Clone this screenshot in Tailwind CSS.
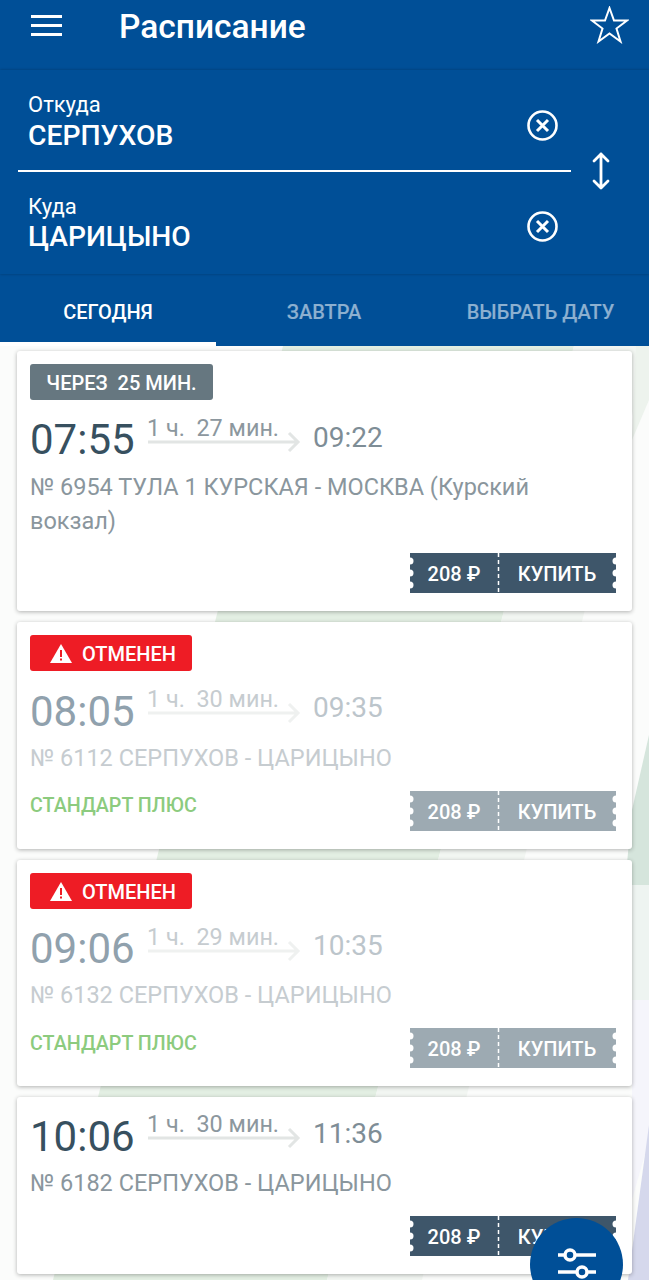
<!DOCTYPE html>
<html lang="ru">
<head>
<meta charset="utf-8">
<script src="https://cdn.jsdelivr.net/npm/@tailwindcss/browser@4"></script>
</head>
<body class="m-0">
<div class="relative w-[649px] h-[1280px] overflow-hidden bg-[#fbfcfb] font-['Roboto',sans-serif]">
  <svg class="absolute left-0 top-0" width="649" height="1280" viewBox="0 0 649 1280" fill="none">
    <polygon points="283,346 574,346 327,1280 53,1280" fill="#e3efe3"/>
    <polygon points="574,346 649,346 422,1280 327,1280" fill="#f2f6f2"/>
    <polygon points="636,346 649,346 649,400 632,440" fill="#edf3ed"/>
    <polygon points="649,735 649,885 625,885 632,810" fill="#d5e5dc"/>
    <polygon points="649,885 649,1060 632,1060 632,885" fill="#eef4f1"/>
    <polygon points="649,1000 649,1140 632,1200 632,1000" fill="#f5f5fb"/>
    <polygon points="649,1125 649,1280 628,1280" fill="#d5d8ec"/>
  </svg>

  <div class="relative flex flex-col bg-[#004f97] text-white">
    <div class="flex items-center h-[70px] relative">
      <svg class="absolute left-[31px] top-[15px]" width="31" height="21" viewBox="0 0 31 21" fill="#fff"><rect width="31" height="3"/><rect y="9" width="31" height="3"/><rect y="18" width="31" height="3"/></svg>
      <div class="absolute left-[119px] top-[7px] text-[33.500px] leading-[40px] font-medium">Расписание</div>
      <svg class="absolute left-[590px] top-[6px]" width="39" height="38" viewBox="0 0 39 38" fill="none" stroke="#fff" stroke-width="2"><polygon points="19.500,2 24,14.500 37,14.500 26.500,22.500 30.500,35.500 19.500,27.500 8.500,35.500 12.500,22.500 2,14.500 15,14.500"/></svg>
    </div>
    <div class="relative h-[204px] shadow-[0_-1px_2px_rgba(0,0,0,0.12),0_1px_2px_rgba(0,0,0,0.12)]">
      <div class="absolute left-[28px] top-[21px] text-[22px] leading-[28px]">Откуда</div>
      <div class="absolute left-[28px] top-[49px] text-[28.300px] leading-[34px] font-medium">СЕРПУХОВ</div>
      <svg class="absolute left-[527px] top-[40px]" width="31" height="31" viewBox="0 0 31 31" fill="none" stroke="#fff" stroke-width="2.600"><circle cx="15.500" cy="15.500" r="14"/><path d="M10 10l11 11M21 10l-11 11" stroke-width="3"/></svg>
      <div class="absolute left-[18px] top-[100px] w-[553px] h-[2px] bg-white"></div>
      <svg class="absolute left-[590px] top-[82px]" width="22" height="38" viewBox="0 0 22 38" fill="none" stroke="#fff" stroke-width="2.800" stroke-linecap="round" stroke-linejoin="round"><path d="M11 2v34M4 9l7-7 7 7M4 29l7 7 7-7"/></svg>
      <div class="absolute left-[28px] top-[123px] text-[22px] leading-[28px]">Куда</div>
      <div class="absolute left-[28px] top-[150px] text-[28.200px] leading-[34px] font-medium">ЦАРИЦЫНО</div>
      <svg class="absolute left-[527px] top-[141px]" width="31" height="31" viewBox="0 0 31 31" fill="none" stroke="#fff" stroke-width="2.600"><circle cx="15.500" cy="15.500" r="14"/><path d="M10 10l11 11M21 10l-11 11" stroke-width="3"/></svg>
    </div>
    <div class="flex h-[72px] text-[20px] font-medium">
      <div class="relative w-[216px] flex items-center justify-center pt-[4px]">СЕГОДНЯ<div class="absolute left-0 right-0 bottom-0 h-[4px] bg-white"></div></div>
      <div class="w-[216px] flex items-center justify-center pt-[4px] text-white/55">ЗАВТРА</div>
      <div class="w-[217px] flex items-center justify-center pt-[4px] text-white/55">ВЫБРАТЬ ДАТУ</div>
    </div>
  </div>

  <div class="relative flex flex-col gap-[11px] mx-[17px] mt-[5px]">
    <!-- card 1 -->
    <div class="relative h-[260px] bg-white rounded-[3px] shadow-[0_1px_4px_rgba(0,0,0,0.3)]">
      <div class="absolute left-[13px] top-[13px] h-[36px] w-[183px] pt-[2px] flex items-center justify-center rounded-[3px] bg-[#667780] text-white text-[20px] font-medium">ЧЕРЕЗ&nbsp; 25 МИН.</div>
      <div class="absolute left-[13px] top-[64px] text-[42px] leading-[50px] text-[#37505f]">07:55</div>
      <div class="absolute left-[130px] top-[62px] text-[23.400px] leading-[30px] text-[#8c979e]">1 ч.&nbsp; 27 мин.</div>
      <svg class="absolute left-[131px] top-[80px]" width="153" height="22" viewBox="0 0 153 22" fill="none" stroke="#e2e5e4" stroke-width="3"><path d="M0 11h150M141 2l9 9-9 9"/></svg>
      <div class="absolute left-[296px] top-[69px] text-[28px] leading-[36px] text-[#7e8d96]">09:22</div>
      <div class="absolute left-[13px] top-[119px] w-[560px] text-[23.500px] leading-[34px] text-[#8a969d]">№ 6954 ТУЛА 1 КУРСКАЯ - МОСКВА (Курский вокзал)</div>
      <div class="absolute left-[393px] top-[202px] flex h-[40px] w-[206px] pt-[2px] items-center bg-[#3e566a] text-white text-[20px] font-medium">
        <svg class="absolute left-0 top-0" width="206" height="40" viewBox="0 0 206 40" fill="#fff"><circle cx="0" cy="8" r="3.500"/><circle cx="0" cy="20" r="3.500"/><circle cx="0" cy="32" r="3.500"/><circle cx="206" cy="8" r="3.500"/><circle cx="206" cy="20" r="3.500"/><circle cx="206" cy="32" r="3.500"/><path d="M88.500 0v40" stroke="#fff" stroke-width="1.500" stroke-dasharray="4 3"/></svg>
        <span class="relative w-[88px] text-center">208 ₽</span><span class="relative w-[118px] text-center">КУПИТЬ</span>
      </div>
    </div>
    <!-- card 2 -->
    <div class="relative h-[227px] bg-white rounded-[3px] shadow-[0_1px_4px_rgba(0,0,0,0.3)]">
      <div class="absolute left-[13px] top-[13px] h-[36px] w-[162px] flex items-center rounded-[3px] bg-[#ee1c25] text-white text-[20px] font-medium">
        <svg class="ml-[20px]" width="22" height="19" viewBox="0 0 22 19"><path d="M11 0l11 19H0z" fill="#fff"/><path d="M10 6h2v7h-2zM10 14.500h2v2h-2z" fill="#ee1c25"/></svg>
        <span class="ml-[10px] pt-[2px]">ОТМЕНЕН</span>
      </div>
      <div class="absolute left-[13px] top-[65px] text-[42px] leading-[50px] text-[#90a1ad]">08:05</div>
      <div class="absolute left-[130px] top-[62px] text-[23.400px] leading-[30px] text-[#c6ccd0]">1 ч.&nbsp; 30 мин.</div>
      <svg class="absolute left-[131px] top-[80px]" width="153" height="22" viewBox="0 0 153 22" fill="none" stroke="#eff1f0" stroke-width="3"><path d="M0 11h150M141 2l9 9-9 9"/></svg>
      <div class="absolute left-[296px] top-[68px] text-[28px] leading-[36px] text-[#bcc5cb]">09:35</div>
      <div class="absolute left-[13px] top-[119px] text-[23.500px] leading-[34px] text-[#c6ccd0]">№ 6112 СЕРПУХОВ - ЦАРИЦЫНО</div>
      <div class="absolute left-[13px] top-[169px] text-[19.700px] leading-[30px] font-medium text-[#8ccb7e]">СТАНДАРТ ПЛЮС</div>
      <div class="absolute left-[393px] top-[169px] flex h-[40px] w-[206px] pt-[2px] items-center bg-[#9daab2] text-white text-[20px] font-medium">
        <svg class="absolute left-0 top-0" width="206" height="40" viewBox="0 0 206 40" fill="#fff"><circle cx="0" cy="8" r="3.500"/><circle cx="0" cy="20" r="3.500"/><circle cx="0" cy="32" r="3.500"/><circle cx="206" cy="8" r="3.500"/><circle cx="206" cy="20" r="3.500"/><circle cx="206" cy="32" r="3.500"/><path d="M88.500 0v40" stroke="#fff" stroke-width="1.500" stroke-dasharray="4 3"/></svg>
        <span class="relative w-[88px] text-center">208 ₽</span><span class="relative w-[118px] text-center">КУПИТЬ</span>
      </div>
    </div>
    <!-- card 3 -->
    <div class="relative h-[226px] bg-white rounded-[3px] shadow-[0_1px_4px_rgba(0,0,0,0.3)]">
      <div class="absolute left-[13px] top-[13px] h-[36px] w-[162px] flex items-center rounded-[3px] bg-[#ee1c25] text-white text-[20px] font-medium">
        <svg class="ml-[20px]" width="22" height="19" viewBox="0 0 22 19"><path d="M11 0l11 19H0z" fill="#fff"/><path d="M10 6h2v7h-2zM10 14.500h2v2h-2z" fill="#ee1c25"/></svg>
        <span class="ml-[10px] pt-[2px]">ОТМЕНЕН</span>
      </div>
      <div class="absolute left-[13px] top-[64px] text-[42px] leading-[50px] text-[#90a1ad]">09:06</div>
      <div class="absolute left-[130px] top-[62px] text-[23.400px] leading-[30px] text-[#c6ccd0]">1 ч.&nbsp; 29 мин.</div>
      <svg class="absolute left-[131px] top-[80px]" width="153" height="22" viewBox="0 0 153 22" fill="none" stroke="#eff1f0" stroke-width="3"><path d="M0 11h150M141 2l9 9-9 9"/></svg>
      <div class="absolute left-[296px] top-[68px] text-[28px] leading-[36px] text-[#bcc5cb]">10:35</div>
      <div class="absolute left-[13px] top-[118px] text-[23.500px] leading-[34px] text-[#c6ccd0]">№ 6132 СЕРПУХОВ - ЦАРИЦЫНО</div>
      <div class="absolute left-[13px] top-[169px] text-[19.700px] leading-[30px] font-medium text-[#8ccb7e]">СТАНДАРТ ПЛЮС</div>
      <div class="absolute left-[393px] top-[168px] flex h-[40px] w-[206px] pt-[2px] items-center bg-[#9daab2] text-white text-[20px] font-medium">
        <svg class="absolute left-0 top-0" width="206" height="40" viewBox="0 0 206 40" fill="#fff"><circle cx="0" cy="8" r="3.500"/><circle cx="0" cy="20" r="3.500"/><circle cx="0" cy="32" r="3.500"/><circle cx="206" cy="8" r="3.500"/><circle cx="206" cy="20" r="3.500"/><circle cx="206" cy="32" r="3.500"/><path d="M88.500 0v40" stroke="#fff" stroke-width="1.500" stroke-dasharray="4 3"/></svg>
        <span class="relative w-[88px] text-center">208 ₽</span><span class="relative w-[118px] text-center">КУПИТЬ</span>
      </div>
    </div>
    <!-- card 4 -->
    <div class="relative h-[177px] bg-white rounded-[3px] shadow-[0_1px_4px_rgba(0,0,0,0.3)]">
      <div class="absolute left-[13px] top-[15px] text-[42px] leading-[50px] text-[#37505f]">10:06</div>
      <div class="absolute left-[130px] top-[12px] text-[23.400px] leading-[30px] text-[#8c979e]">1 ч.&nbsp; 30 мин.</div>
      <svg class="absolute left-[131px] top-[30px]" width="153" height="22" viewBox="0 0 153 22" fill="none" stroke="#e2e5e4" stroke-width="3"><path d="M0 11h150M141 2l9 9-9 9"/></svg>
      <div class="absolute left-[296px] top-[19px] text-[28px] leading-[36px] text-[#7e8d96]">11:36</div>
      <div class="absolute left-[13px] top-[69px] text-[23.500px] leading-[34px] text-[#8a969d]">№ 6182 СЕРПУХОВ - ЦАРИЦЫНО</div>
      <div class="absolute left-[393px] top-[119px] flex h-[40px] w-[206px] pt-[2px] items-center bg-[#3e566a] text-white text-[20px] font-medium">
        <svg class="absolute left-0 top-0" width="206" height="40" viewBox="0 0 206 40" fill="#fff"><circle cx="0" cy="8" r="3.500"/><circle cx="0" cy="20" r="3.500"/><circle cx="0" cy="32" r="3.500"/><circle cx="206" cy="8" r="3.500"/><circle cx="206" cy="20" r="3.500"/><circle cx="206" cy="32" r="3.500"/><path d="M88.500 0v40" stroke="#fff" stroke-width="1.500" stroke-dasharray="4 3"/></svg>
        <span class="relative w-[88px] text-center">208 ₽</span><span class="relative w-[118px] text-center">КУПИТЬ</span>
      </div>
    </div>
  </div>

  <div class="absolute left-[530px] top-[1218px] w-[93px] h-[93px] rounded-full bg-[#004f97] flex justify-center pt-[30px]">
    <svg width="38" height="32" viewBox="0 0 38 32" fill="none" stroke="#fff" stroke-width="3.500"><path d="M0 7h7M17 7h21M0 24h19M29 24h9"/><circle cx="12" cy="7" r="5"/><circle cx="24" cy="24" r="5"/></svg>
  </div>
</div>
</body>
</html>
